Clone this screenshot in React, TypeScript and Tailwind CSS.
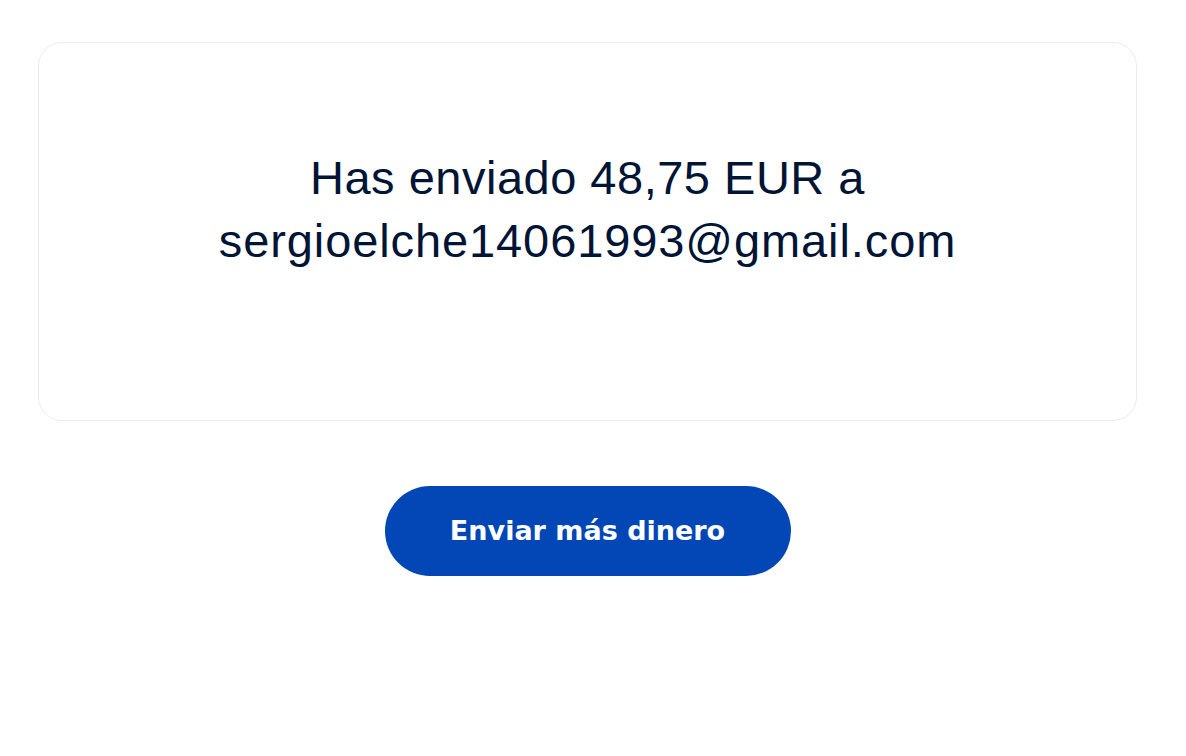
import * as React from 'react';

export default function App() {
  return (
    <div className="min-h-screen bg-white" style={{ fontFamily: '"Liberation Sans", Arial, sans-serif' }}>
      <div className="ml-[38px] w-[1099px] pt-[42px]">
        <section className="flex h-[379px] flex-col items-center rounded-[24px] border border-[#ececec] bg-white pt-[103px]">
          <h1 className="text-center text-[47px] font-normal leading-[63px] tracking-[0.5px] text-[#001435]">
            Has enviado 48,75 EUR a
            <br />
            <span className="tracking-[0.9px]">sergioelche14061993@gmail.com</span>
          </h1>
        </section>
        <div className="mt-[65px] flex justify-center">
          <button
            type="button"
            className="h-[90px] w-[406px] rounded-full bg-[#0346b5] text-[27px] font-bold text-white"
            style={{ fontFamily: '"DejaVu Sans", sans-serif' }}
          >
            Enviar más dinero
          </button>
        </div>
      </div>
    </div>
  );
}
